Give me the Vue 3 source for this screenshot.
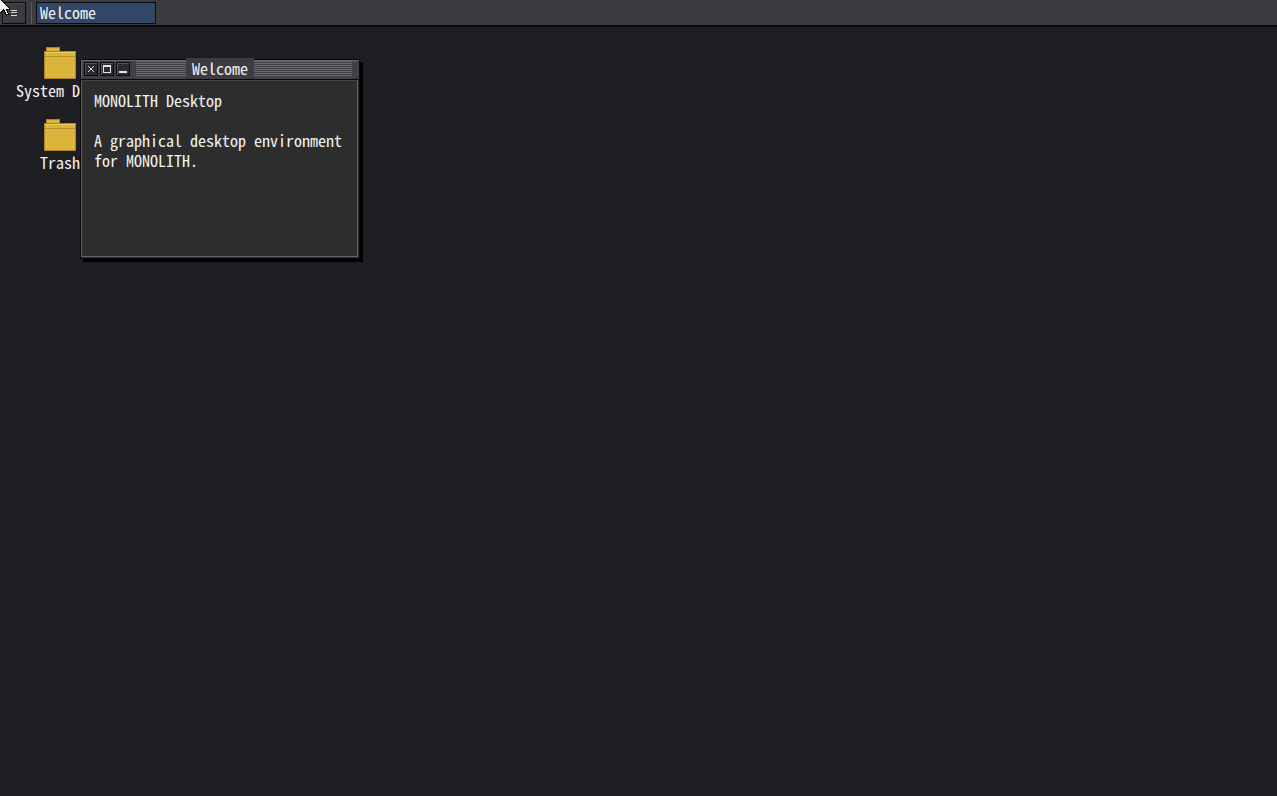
<script setup>
const icons = [
  { name: 'System Disk' },
  { name: 'Trash' },
]
</script>

<template>
  <div class="desktop">
    <header class="bar">
      <button class="menu" aria-label="Menu">
        <svg width="8" height="8" viewBox="0 0 8 8" shape-rendering="crispEdges" aria-hidden="true">
          <path d="M1 1h6v1H1zM1 3h6v1H1zM1 6h6v1H1z" fill="#d8d8da" />
        </svg>
      </button>
      <span class="divider"></span>
      <button class="task">Welcome</button>
    </header>

    <main class="space">
      <nav class="icons">
        <button v-for="icon in icons" :key="icon.name" class="icon">
          <svg width="32" height="32" viewBox="0 0 32 32" shape-rendering="crispEdges" aria-hidden="true">
            <path d="M2 0h14v4h16v28H0V4h2z" fill="#a8832a" />
            <path d="M3 1h12v3H3zM1 5h30v26H1z" fill="#dcb43c" />
            <path d="M1 5h30v1H1z" fill="#f0cc58" />
            <path d="M1 9h30v1H1z" fill="#b8902e" />
          </svg>
          <span>{{ icon.name }}</span>
        </button>
      </nav>

      <section class="window" aria-label="Welcome">
        <div class="title">
          <button class="ctl" aria-label="Close">
            <svg width="10" height="10" viewBox="0 0 10 10" aria-hidden="true">
              <path d="M2 2l6 6M8 2l-6 6" stroke="#dcdcde" fill="none" />
            </svg>
          </button>
          <button class="ctl" aria-label="Maximize">
            <svg width="10" height="10" viewBox="0 0 10 10" shape-rendering="crispEdges" aria-hidden="true">
              <path d="M1 1h8v8H1zM2 3v5h6V3z" fill="#e6e6e8" fill-rule="evenodd" />
            </svg>
          </button>
          <button class="ctl" aria-label="Minimize">
            <svg width="10" height="10" viewBox="0 0 10 10" shape-rendering="crispEdges" aria-hidden="true">
              <path d="M1 7h8v2H1z" fill="#e6e6e8" />
            </svg>
          </button>
          <div class="stripes"></div>
          <h1>Welcome</h1>
        </div>
        <div class="body">
          <p>MONOLITH Desktop</p>
          <p>A graphical desktop environment for MONOLITH.</p>
        </div>
      </section>
    </main>

    <svg class="cursor" width="12" height="16" viewBox="0 0 12 16" shape-rendering="crispEdges" aria-hidden="true">
      <path d="M0 0h2v1h1v1h1v1h1v1h1v1h1v1h1v1h1v1h1v2H7v1h1v2h1v2H5v-2H4v-2H3v1H2v1H0z" fill="#000" />
      <path d="M0 0h1v1h1v1h1v1h1v1h1v1h1v1h1v1h1v1h1v1H6v2h1v2h1v1H6v-2H5v-2H4v-1H3v1H2v1H1v1H0z" fill="#f4f4f4" />
    </svg>
  </div>
</template>

<style>
body {
  background: #1f1e23;
}
</style>

<style scoped>
.desktop {
  position: relative;
  display: flex;
  flex-direction: column;
  min-height: 100vh;
  overflow: hidden;
  background: #1f1e23;
  color: #f4f4f4;
  font: 16px/20px "Noto Sans Mono CJK SC", "DejaVu Sans Mono", monospace;
}
button {
  box-sizing: border-box;
  margin: 0;
  padding: 0;
  border: 0;
  background: none;
  color: inherit;
  font: inherit;
}
.cursor {
  position: absolute;
  left: 0;
  top: 0;
}
.bar {
  display: flex;
  align-items: center;
  box-sizing: border-box;
  height: 27px;
  padding: 0 2px;
  border-bottom: 2px solid #0b0b0e;
  background: #3c3b40;
}
.menu {
  display: flex;
  align-items: center;
  justify-content: center;
  width: 24px;
  height: 22px;
  border: 1px solid #0a0a0c;
  box-shadow: inset 1px 1px #4b4a50;
}
.divider {
  width: 1px;
  height: 22px;
  margin: 0 4px 0 5px;
  background: #5c5b61;
}
.task {
  width: 120px;
  height: 22px;
  padding: 0 3px 2px;
  border: 1px solid #0a0a12;
  background: #324766;
  line-height: 18px;
  text-align: left;
}
.space {
  position: relative;
  flex: 1;
}
.icons {
  display: flex;
  flex-direction: column;
  align-items: flex-start;
  gap: 19px;
  padding: 20px 16px;
}
.icon {
  display: flex;
  flex-direction: column;
  align-items: center;
  gap: 1px;
  width: 88px;
  white-space: nowrap;
}
.window {
  position: absolute;
  left: 80px;
  top: 32px;
  box-sizing: border-box;
  width: 280px;
  border: 1px solid #08080a;
  background: #2d2d2d;
  box-shadow: 3px 3px #000;
}
.title {
  position: relative;
  display: flex;
  align-items: center;
  gap: 2px;
  box-sizing: border-box;
  height: 20px;
  padding: 0 7px 1px 3px;
  border-bottom: 1px solid #08080a;
  background: #414045;
  box-shadow: inset 1px 1px #67666c;
}
.ctl {
  display: flex;
  align-items: center;
  justify-content: center;
  width: 14px;
  height: 14px;
  border: 1px solid #08080a;
  background: #2c2b30;
  box-shadow: inset 1px 1px #55545a;
}
.stripes {
  flex: 1;
  height: 16px;
  margin-left: 4px;
  background: repeating-linear-gradient(#68676d 0 1px, #414045 1px 2px);
}
h1 {
  position: absolute;
  left: 50%;
  top: -2px;
  transform: translateX(-50%);
  margin: 0;
  padding: 0 6px 1px;
  background: #3c3b40;
  font: inherit;
}
.body {
  box-sizing: border-box;
  min-height: 177px;
  margin: 0 1px 1px 0;
  padding: 9px 11px 9px 12px;
  border: 1px solid #626264;
  border-top-color: #454547;
}
p {
  margin: 0 0 20px;
}
</style>
